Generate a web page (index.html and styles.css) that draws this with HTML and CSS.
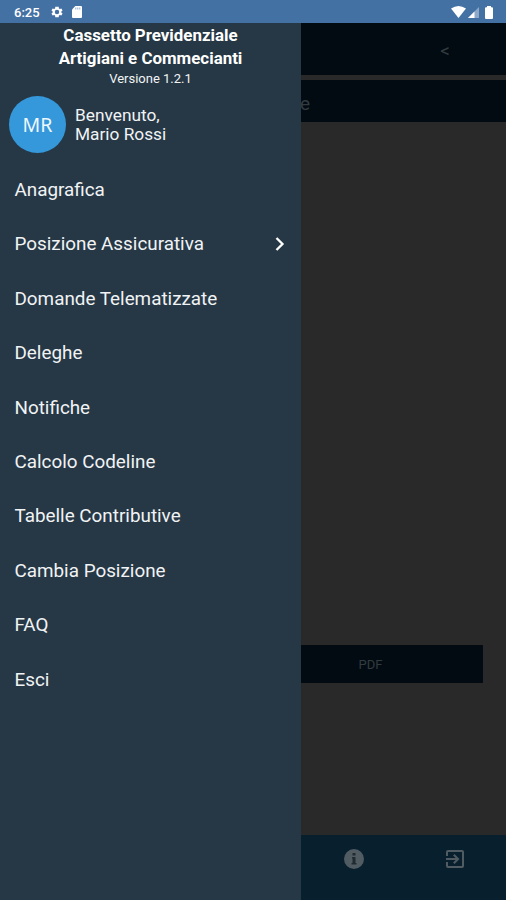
FILE: index.html
```html
<!DOCTYPE html>
<html lang="it">
<head>
<meta charset="utf-8">
<title>Cassetto Previdenziale</title>
<link rel="stylesheet" href="styles.css">
</head>
<body>
<header class="status">
  <span class="time">6:25</span>
  <svg class="gear" viewBox="0 0 24 24"><path fill="currentColor" fill-rule="evenodd" d="M19.4 13c.1-.6.1-1.300 0-2l2.100-1.600-2-3.500-2.500 1a7.300 7.300 0 0 0-1.700-1L14.900 3H9.100l-.4 2.900c-.6.200-1.200.6-1.700 1l-2.500-1-2 3.500L4.600 11c-.1.700-.1 1.400 0 2l-2.100 1.600 2 3.500 2.500-1c.5.400 1.100.8 1.700 1l.4 2.900h5.800l.4-2.900c.6-.2 1.200-.6 1.700-1l2.500 1 2-3.500zM12 8.200a3.800 3.800 0 1 1 0 7.600 3.800 3.800 0 0 1 0-7.600z"/></svg>
  <svg class="sd" viewBox="0 0 10 12"><path fill="currentColor" d="M3.300 0H9a1 1 0 0 1 1 1v10a1 1 0 0 1-1 1H1a1 1 0 0 1-1-1V3.500z"/><path stroke="#789bc6" stroke-width=".8" d="M3.800 1.500v2M5.800 1.500v2M7.800 1.500v2"/></svg>
  <span class="spacer"></span>
  <svg class="wifi" viewBox="0 0 15 12"><path fill="currentColor" d="M0 2.500Q7.500-2.500 15 2.500L7.500 12z"/></svg>
  <svg class="signal" viewBox="0 0 11 11"><path fill="currentColor" opacity=".4" d="M11 0v11H0z"/><path fill="currentColor" d="M6.500 4.500V11H0z"/></svg>
  <svg class="battery" viewBox="0 0 8 13"><path fill="currentColor" d="M2 0h4v1.300h1a1 1 0 0 1 1 1V12a1 1 0 0 1-1 1H1a1 1 0 0 1-1-1V2.300a1 1 0 0 1 1-1h1z"/></svg>
</header>
<div class="screen">
  <aside class="drawer">
    <div class="heading">
      <h1><span class="line-one">Cassetto Previdenziale</span><br><span class="line-two">Artigiani e Commecianti</span></h1>
      <p>Versione 1.2.1</p>
    </div>
    <div class="user">
      <div class="avatar">MR</div>
      <div class="welcome"><span>Benvenuto,</span><span>Mario Rossi</span></div>
    </div>
    <nav class="menu">
      <a>Anagrafica</a>
      <a>Posizione Assicurativa<svg class="chevron" viewBox="0 0 10 14"><path fill="none" stroke="currentColor" stroke-width="2.300" d="M1.500 1l6 6-6 6"/></svg></a>
      <a>Domande Telematizzate</a>
      <a>Deleghe</a>
      <a>Notifiche</a>
      <a>Calcolo Codeline</a>
      <a>Tabelle Contributive</a>
      <a>Cambia Posizione</a>
      <a>FAQ</a>
      <a>Esci</a>
    </nav>
  </aside>
  <main class="content">
    <div class="toolbar">&lt;</div>
    <div class="title">e</div>
    <div class="page"><div class="pdf">PDF</div></div>
    <footer class="tabs">
      <svg viewBox="0 0 24 24"><path fill="currentColor" d="M12 2a10 10 0 1 0 0 20 10 10 0 0 0 0-20z"/><path fill="#202a31" d="M10.500 6h3v2.500h-3zM10 10h3.500v6H14.500v1.500h-5V16h1v-4.500H10z"/></svg>
      <svg viewBox="0 0 24 24"><path fill="currentColor" d="M10.090 15.590 11.500 17l5-5-5-5-1.410 1.410L12.670 11H3v2h9.670zM19 3H5a2 2 0 0 0-2 2v4h2V5h14v14H5v-4H3v4a2 2 0 0 0 2 2h14a2 2 0 0 0 2-2V5a2 2 0 0 0-2-2z"/></svg>
    </footer>
  </main>
</div>
</body>
</html>
```
FILE: styles.css
```css
* { box-sizing: border-box; }
body { margin: 0; height: 900px; display: flex; flex-direction: column; overflow: hidden; font-family: Roboto, sans-serif; color: #f1f3f5; }
svg { display: block; flex: none; }
.status { height: 23px; flex: none; display: flex; align-items: center; padding: 1px 13px 0 14px; background: #4471a3; color: #fff; }
.time { width: 36px; font-size: 13px; font-weight: 500; }
.gear { width: 14px; height: 14px; margin-right: -1px; }
.sd { width: 10px; height: 12px; margin-left: 9px; }
.spacer { flex: 1; }
.wifi { width: 15px; height: 12px; }
.signal { width: 11px; height: 11px; margin-left: 2px; }
.battery { width: 8px; height: 13px; margin-left: 6px; }
.screen { flex: 1; display: flex; min-height: 0; }
.drawer { width: 301px; flex: none; background: #263845; }
.heading { text-align: center; height: 68px; }
.heading h1 { margin: 0; padding-top: 1px; font-size: 16.900px; line-height: 23px; font-weight: 700; color: #fff; }
.heading p { margin: 0; font-size: 13px; line-height: 17px; }
.user { display: flex; align-items: center; height: 67px; padding: 0 0 0 9px; gap: 9px; }
.avatar { width: 57px; height: 57px; border-radius: 50%; background: #3498db; display: flex; align-items: center; justify-content: center; font-family: "Noto Sans", sans-serif; font-size: 19.500px; color: #eef7fd; }
.welcome { display: flex; flex-direction: column; font-size: 17.300px; line-height: 19px; }
.menu { padding-top: 4.800px; }
.menu a { height: 54.400px; padding: 0 16px 0 14.500px; display: flex; align-items: center; justify-content: space-between; font-size: 18.850px; white-space: nowrap; }
.chevron { width: 10px; height: 14px; color: #fff; }
.content { flex: 1; display: flex; flex-direction: column; background: #292929; color: #333b40; }
.toolbar { height: 52px; padding: 3px 56px 0 0; display: flex; align-items: center; justify-content: flex-end; background: #020b12; font-size: 19px; }
.title { height: 42px; margin-top: 5px; padding-top: 4px; display: flex; align-items: center; background: #020b12; font-size: 19px; text-indent: -1px; }
.page { flex: 1; padding: 523px 23px 0 0; }
.pdf { height: 38px; padding-right: 43px; display: flex; align-items: center; justify-content: center; background: #020b12; font-size: 13px; }
.tabs { height: 65px; display: flex; padding: 12px 39px 0 41px; justify-content: space-between; background: #08202e; color: #505b62; }
.tabs svg { width: 24px; height: 24px; }
```
